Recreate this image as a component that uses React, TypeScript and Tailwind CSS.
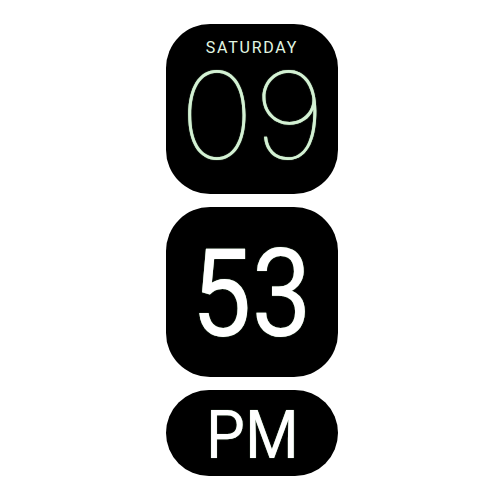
import React from 'react';

function App() {
  return (
    <div className="flex h-[500px] w-full flex-col items-center justify-center gap-[13px] bg-white pl-1">
      <div className="flex h-[170px] w-[172px] flex-col items-center overflow-hidden rounded-[44px] bg-black pt-[15px]">
        <div className="text-[16px] leading-[18px] tracking-[0.11em] text-[#e2f7e2] [font-family:Roboto,'Liberation_Sans',sans-serif]">
          SATURDAY
        </div>
        <div className="mt-[6px] inline-block scale-x-[1.06] text-[121px] font-thin leading-[104px] tracking-[-0.01em] text-[#d4f1d4] [font-family:Inter,'Liberation_Sans',sans-serif] [text-shadow:0_0_1px_#b8e6b8]">
          09
        </div>
      </div>
      <div className="flex h-[170px] w-[172px] items-center justify-center rounded-[44px] bg-black pt-[6px]">
        <span className="inline-block scale-x-[0.88] text-[122px] leading-none text-white [font-family:Roboto,'Liberation_Sans',sans-serif] [text-shadow:0_0_1px_#9fd49f]">
          53
        </span>
      </div>
      <div className="flex h-[86px] w-[172px] items-center justify-center rounded-full bg-black pt-[4px]">
        <span className="inline-block scale-x-[0.92] text-[67px] leading-none text-white [font-family:Roboto,'Liberation_Sans',sans-serif] [text-shadow:0_0_1px_#9fd49f]">
          PM
        </span>
      </div>
    </div>
  );
}

export default App;
